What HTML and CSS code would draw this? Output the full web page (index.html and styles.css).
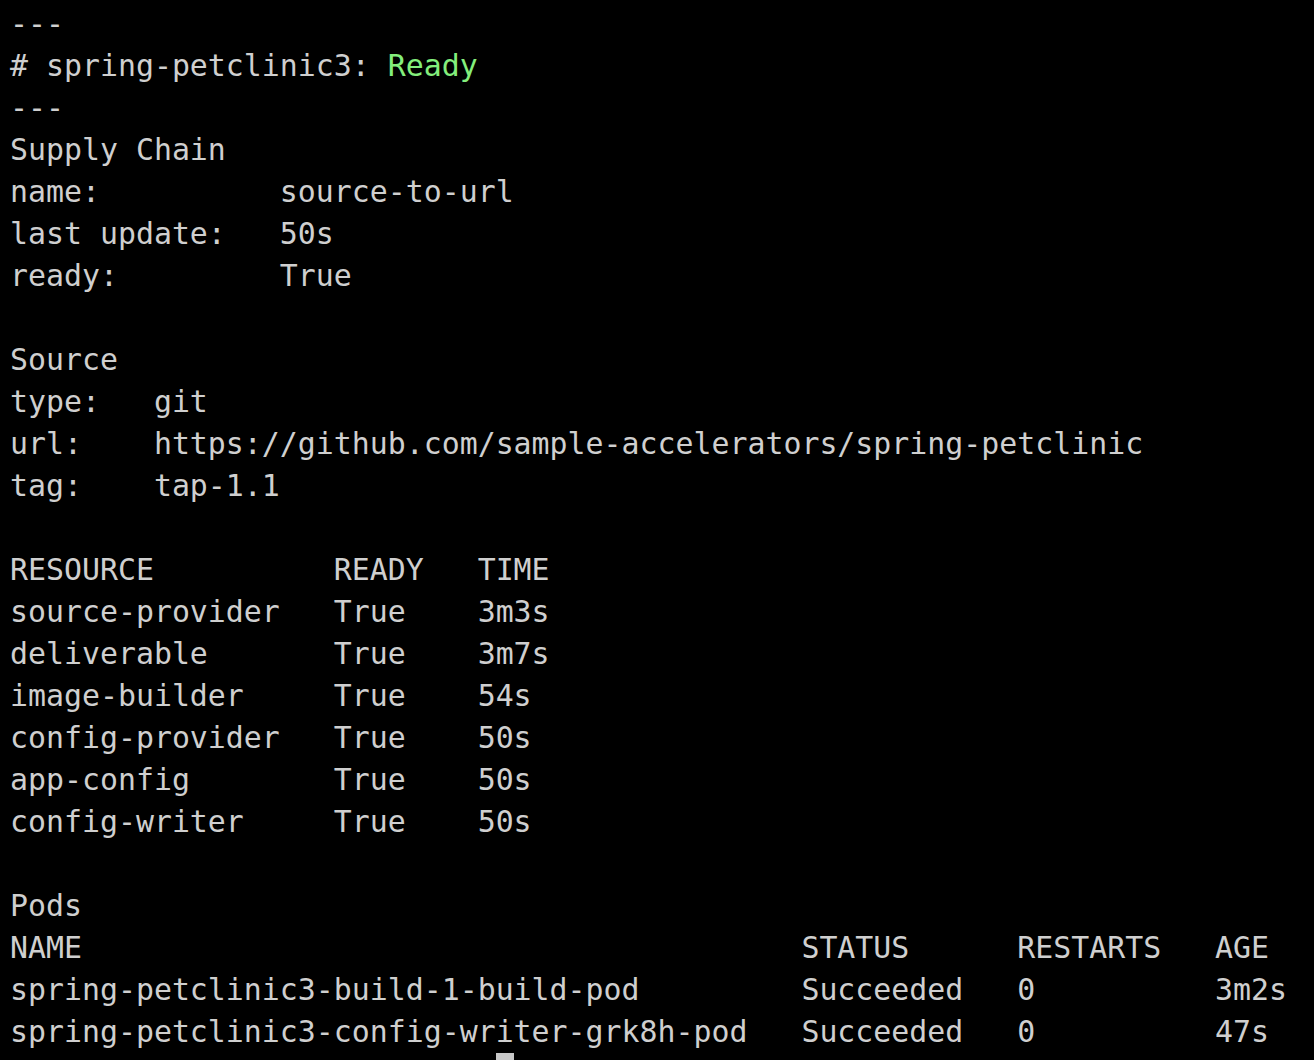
FILE: index.html
```html
<!DOCTYPE html>
<html>
<head>
<meta charset="utf-8">
<link rel="stylesheet" href="styles.css">
</head>
<body>
<pre class="term">---
# spring-petclinic3: <span class="ok">Ready</span>
---
Supply Chain
name:          source-to-url
last update:   50s
ready:         True

Source
type:   git
url:    https://github.com/sample-accelerators/spring-petclinic
tag:    tap-1.1

RESOURCE          READY   TIME
source-provider   True    3m3s
deliverable       True    3m7s
image-builder     True    54s
config-provider   True    50s
app-config        True    50s
config-writer     True    50s

Pods
NAME                                        STATUS      RESTARTS   AGE
spring-petclinic3-build-1-build-pod         Succeeded   0          3m2s
spring-petclinic3-config-writer-grk8h-pod   Succeeded   0          47s
                           <span class="cursor"> </span></pre>
</body>
</html>
```

FILE: styles.css
```css
html, body {
  margin: 0;
  padding: 0;
  background: #000;
  overflow: hidden;
}
body {
  width: 1314px;
  height: 1060px;
}
.term {
  margin: 0;
  padding: 3px 0 0 10px;
  font-family: "DejaVu Sans Mono", monospace;
  font-size: 29.88px;
  line-height: 42px;
  color: #cfcfcf;
  white-space: pre;
}
.ok {
  color: #84ee7c;
}
.cursor {
  display: inline-block;
  width: 18px;
  height: 42px;
  vertical-align: top;
  background: #c8c8c8;
}
```
